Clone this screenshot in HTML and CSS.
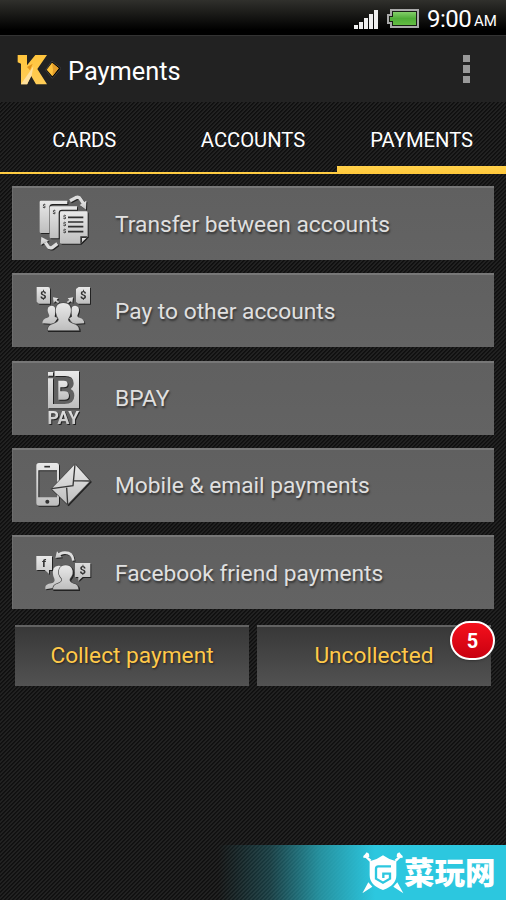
FILE: index.html
```html
<!DOCTYPE html>
<html lang="en">
<head>
<meta charset="utf-8">
<title>Payments</title>
<link rel="stylesheet" href="styles.css">
</head>
<body>
<div class="screen">
  <header class="status">
    <svg class="signal" width="24" height="20" viewBox="0 0 24 20"><path d="M0 16h4v4H0zM5 13h4v7H5zM10 9h4v11h-4zM15 5h4v15h-4zM20 1h4v19h-4z"/></svg>
    <svg class="battery" width="32" height="20" viewBox="0 0 32 20">
      <defs><linearGradient id="charge" x1="0" y1="0" x2="0" y2="1"><stop offset="0" stop-color="#83cf69"/><stop offset=".5" stop-color="#50ad38"/><stop offset="1" stop-color="#63bd42"/></linearGradient></defs>
      <path d="M4 1h27v17H4v-4H1V6h3z" fill="#171d14" stroke="#aaa" stroke-width="2"/>
      <path d="M6 3h23v13H6v-4H3V8h3z" fill="url(#charge)"/>
    </svg>
    <span class="time">9:00</span><span class="ampm">AM</span>
  </header>
  <div class="actionbar">
    <svg class="logo" width="46" height="36" viewBox="0 0 138 108">
      <defs><linearGradient id="gold" x1="0" y1="0" x2="0" y2="1"><stop offset="0" stop-color="#ffc43c"/><stop offset="1" stop-color="#ffcd58"/></linearGradient></defs>
      <path d="M8 12h28v31l25-31h35L67 54l29 46H63L47 72l-10 28H18V38l-10-4z" fill="url(#gold)"/>
      <path d="M18 100l29-42 8-12-5 28-14 26z" fill="#ffe09c"/>
      <path d="M36 48l17-10-8 20z" fill="#e29219"/>
      <path d="M92 57l19-27 27 22-26 30z" fill="#050505" stroke="#555" stroke-width="2"/>
      <path d="M95 56l16-21 20 17-19 24z" fill="#ffc33d"/><path d="M111 35l20 17-19 24 2-20z" fill="#e39d2a"/>
    </svg>
    <h1>Payments</h1>
    <div class="overflow"><i></i><i></i><i></i></div>
  </div>
  <nav class="tabs"><a>CARDS</a><a>ACCOUNTS</a><a class="active">PAYMENTS</a></nav>
  <main>
    <div class="row">
      <svg class="icon" viewBox="6 21 270 222">
        <defs><linearGradient id="silver" x1="0" y1="0" x2="0" y2="1"><stop offset="0" stop-color="#e9e9e9"/><stop offset="1" stop-color="#bebebe"/></linearGradient></defs>
        <path d="M89 69q0-4 4-4h79v10h-44q-10 0-10 10v77H93q-4 0-4-4z"/>
        <path d="M119 86q0-4 4-4h78v10h-45q-10 0-10 10v76h-23q-4 0-4-4z"/>
        <path d="M150 101q0-4 4-4h75q4 0 4 4v71l-22 22h-57q-4 0-4-4z"/>
        <path class="line" d="M174 115h46M174 129h46M174 143h46M174 158h46"/>
        <path class="ink" d="M211 194v-22h22z"/>
        <path d="M216 190v-13h13z"/>
        <g class="tiny"><text x="102" y="87">$</text><text x="132" y="104">$</text><text x="164" y="120">$</text><text x="164" y="141">$</text><text x="164" y="163">$</text></g>
        <path class="arc" d="M180 65l17-9q10-4 15 5l8 12"/><path d="M209 78l20-13-1 27z"/>
        <path class="arc" d="M142 194l-16 12q-9 3-14-7l-6-9"/><path d="M92 198l2-24 22 11z"/>
      </svg>
      <span>Transfer between accounts</span>
    </div>
    <div class="row">
      <svg class="icon" viewBox="6 18 270 222">
        <path d="M80 60h34q6 0 6 6v44H86l-6-6zM206 60h34v50h-36l-6-6V66z"/>
        <g class="dollar"><text x="100" y="96">$</text><text x="220" y="96">$</text></g>
        <path d="M129 91l16 3-5 5 8 6-4 4-8-6-5 5zM189 91l-16 3 5 5-8 6 4 4 8-6 5 5z"/>
        <path d="M97 169q0-13 15-17 8-3 5-9-7-12-2-22 4-5 10-5 14 0 11 20l-2 13 9 5-12 17zM223 169q0-13-15-17-8-3-5-9 7-12 2-22-4-5-10-5-14 0-11 20l2 13-9 5 12 17z"/>
        <path class="cut" d="M113 190q0-16 18-20 15-5 15-13-14-23-6-39 6-10 20-10t20 10q8 16-6 39 0 8 15 13 18 4 18 20z"/>
      </svg>
      <span>Pay to other accounts</span>
    </div>
    <div class="row">
      <svg class="icon" viewBox="6 18 270 222">
        <path d="M114 51h15v11h-15zM134 48h73v112h-93V70h15v77h34q30 0 30-25 0-14-11-20 9-6 9-17 0-22-26-22h-31z"/>
        <path d="M145 77h16q12 0 12 10t-12 10h-10v12h12q14 0 14 13 0 12-14 12h-18z"/>
        <text class="pay" x="160" y="207" textLength="95" lengthAdjust="spacingAndGlyphs">PAY</text>
      </svg>
      <span>BPAY</span>
    </div>
    <div class="row">
      <svg class="icon" viewBox="6 18 270 222">
        <path fill-rule="evenodd" d="M87 63h52q8 0 8 8v111q0 9-8 9H87q-8 0-8-9V71q0-8 8-8zM85 85v81h56V85z"/>
        <path class="line" d="M103 74h17"/><circle class="ink" cx="112" cy="179" r="6"/>
        <path class="cut" d="M195 67l45 50-67 70-48-47z"/>
        <path class="seam" d="M195 67l-6 64-64 9M189 116l51 1M170 137l3 50"/>
      </svg>
      <span>Mobile &amp; email payments</span>
    </div>
    <div class="row">
      <svg class="icon" viewBox="6 15 270 222">
        <path d="M79 78h47v42h-9v12l-13-12H79zM195 99h46v42h-23l-13 12v-12h-10z"/>
        <g class="dollar"><text x="102" y="112">f</text><text x="218" y="132">$</text></g>
        <path class="arc thin" d="M190 92q-2-24-25-24-14 0-22 11"/><path d="M136 84l5-20 15 18z"/>
        <path d="M106 178v-7q0-8 18-11 13-4 9-14-8-15-2-31 5-9 16-8 12 0 14 7v30l-10 27z"/>
        <path class="cut" d="M129 178q0-13 14-17 14-4 13-14-15-16-7-32 5-9 18-9t18 9q8 16-6 32-2 10 12 14 14 2 14 17z"/>
      </svg>
      <span>Facebook friend payments</span>
    </div>
    <div class="buttons">
      <button>Collect payment</button>
      <button>Uncollected<b class="badge">5</b></button>
    </div>
  </main>
  <footer class="brand">
    <svg width="44" height="43" viewBox="0 0 132 129">
      <path d="M7 20q-2-6 4-9l6-7 7 4 1 9-9 4zM125 20q2-6-4-9l-6-7-7 4-1 9 9 4zM17 15l14 11-5 6-14-13zM115 15l-14 11 5 6 14-13zM66 13q19 14 40 18v42q0 30-40 44Q26 103 26 73V31q21-4 40-18zM22 94l12 13-30 20zM109 94l-12 13 30 20z"/>
      <path class="g" d="M90 46H52q-7 0-7 7v30l21 12 21-12V68H67v13"/>
    </svg>
    <span>菜玩网</span>
  </footer>
</div>
</body>
</html>
```
FILE: styles.css
```css
* { box-sizing: border-box; }
body { margin: 0; }
.screen {
  width: 506px; height: 900px; overflow: hidden;
  display: flex; flex-direction: column;
  font-family: Roboto, "Liberation Sans", sans-serif; color: #fff;
  background: repeating-linear-gradient(135deg, #0e0e0e 0, #151515 1px, #2b2b2b 1.9px, #0e0e0e 2.828px);
}
.status {
  height: 35px; flex: none; display: flex; align-items: center; padding: 2px 9px 0 354px;
  background: linear-gradient(#30302c, #171715 45%, #000 85%);
}
.signal { fill: #eee; margin-right: 9px; }
.battery { margin-right: 8px; }
.time { font-size: 24px; width: 43px; letter-spacing: -.5px; white-space: nowrap; }
.ampm { font-size: 15px; margin: 5px 0 0 4px; }
.actionbar {
  height: 67px; flex: none; display: flex; align-items: center; padding: 0 36px 0 15px;
  background: #222; border-top: 1px solid #333;
}
h1 { font-size: 25.4px; font-weight: 400; margin: 4px 0 0 7px; line-height: 32px; }
.overflow { margin-left: auto; display: grid; gap: 3px; }
.overflow i { width: 7px; height: 7.5px; background: #999; }
.tabs {
  height: 72px; flex: none; display: grid; grid-template-columns: repeat(3, 1fr);
  background: linear-gradient(#ffd04a, #ffc83b) 0 100% / 100% 2px no-repeat;
}
.tabs a { height: 72px; text-align: center; font-size: 20.2px; line-height: 76px; }
.tabs .active { background: linear-gradient(#ffd04a, #ffc83b) 0 100% / 100% 8px no-repeat; }
main { padding: 12px 12px 0; display: flex; flex-direction: column; gap: 13.3px; }
.row {
  height: 74px; width: 482px; display: flex; align-items: center;
  background: linear-gradient(#606060, #636363);
  border-top: 2px solid #777; border-left: 1px solid #6d6d6d;
  color: #e0e0e0; font-size: 22.75px; text-shadow: 1px 2px 2px #333;
}
.icon { width: 90px; height: 74px; margin: -2px 13px 0 -1px; fill: url(#silver); filter: drop-shadow(1px 1px .5px #222); text-shadow: none; }
.row span { white-space: nowrap; }
.line { fill: none; stroke: #303030; stroke-width: 5; }
.ink, .dollar, .tiny { fill: #333; }
.arc { fill: none; stroke: #ddd; stroke-width: 10; }
.thin { stroke-width: 8; }
.cut { stroke: #4b4b4b; stroke-width: 4; paint-order: stroke; }
.seam { fill: none; stroke: #383838; stroke-width: 4; }
.dollar { font: 700 34px Roboto, sans-serif; text-anchor: middle; }
.tiny { font: 700 17px Roboto, sans-serif; text-anchor: middle; }
.pay { font: 700 54px Roboto, sans-serif; text-anchor: middle; }
.buttons { display: flex; gap: 8px; padding: 3px 3px 0; }
button {
  position: relative; width: 234px; height: 61px; padding: 0 0 2px; border: 0; border-top: 2px solid #626262;
  background: linear-gradient(#383838, #525252); color: #ffc94a;
  font: 400 22.7px Roboto, sans-serif; text-shadow: 1px 1px 2px #222;
}
.badge {
  position: absolute; right: -4px; top: -6px; width: 45px; height: 39px;
  border: 2px solid #fff; border-radius: 20px; background: linear-gradient(#f5101c, #c90010);
  color: #fff; font-size: 20px; line-height: 36px; text-shadow: none; box-shadow: 0 1px 2px #333;
}
.brand {
  margin-top: auto; height: 55px; flex: none; display: flex; align-items: center; padding-left: 361px;
  background: linear-gradient(90deg, transparent 218px, #2fbfd340 270px, #2bbdd0bb 320px, #2cc7df 375px);
}
.brand svg { fill: #fff; flex: none; }
.brand .g { fill: none; stroke: #2cc7df; stroke-width: 7; }
.brand span { font: 900 30.5px/44px "Noto Sans CJK SC", sans-serif; white-space: nowrap; margin: -3px 0 0 -1px; }
```
